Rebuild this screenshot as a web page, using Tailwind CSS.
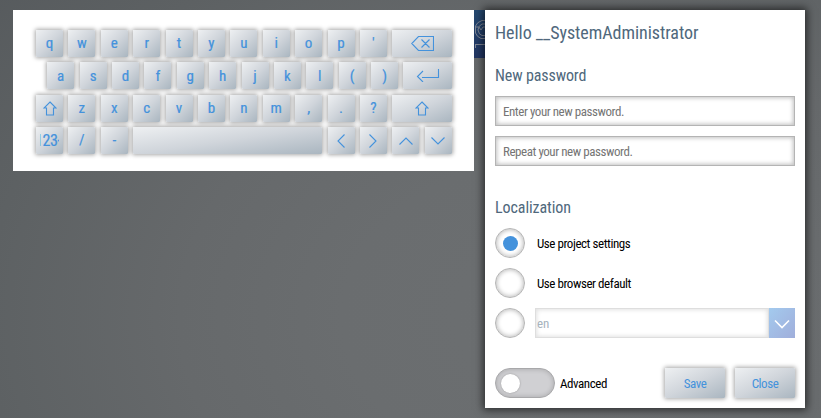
<!DOCTYPE html>
<html lang="en">
<head>
<meta charset="utf-8">
<title>User settings</title>
<script src="https://cdn.jsdelivr.net/npm/@tailwindcss/browser@4"></script>
</head>
<body class="relative flex w-[821px] h-[418px] overflow-hidden pt-[10px] pl-[13px] font-['Roboto_Condensed','Roboto',sans-serif] [font-stretch:75%] bg-[radial-gradient(ellipse_650px_460px_at_570px_317px,#6c6f71_0%,#6a6d6f_35%,#66696b_60%,#5d6163_90%,#54585b_125%)]">
<main id="keyboard" class="flex flex-col gap-[5.4px] w-[461px] h-[161px] shrink-0 bg-white pl-[23px] pt-[20px] text-[15px] text-[#4492dc]"></main>
<aside class="w-[11px] h-12 shrink-0 overflow-hidden bg-linear-to-b from-[#24486f] to-[#223562]">
<svg class="block" width="11" height="48" viewBox="0 0 11 48" fill="none" stroke="#7e8594"><path d="M11 10.500H8Q3 12 1.500 16V23Q3 27 7 28.500h4M11 14H8Q4 16 4 20 5 25 8 25.500h3M2 17h3l2 3 2-3h2M1 34.500h10M1.500 34v4"/></svg>
</aside>
<section class="relative w-[320px] h-[398px] shrink-0 bg-white px-[10px] shadow-[0_0_8px_2px_rgba(0,0,0,0.6)] text-[13px] tracking-[-0.45px] text-black">
<h1 class="h-[45px] leading-[45px] text-[18px] tracking-[-0.05px] text-[#4f687c] whitespace-nowrap">Hello __SystemAdministrator</h1>
<h2 class="h-[41px] leading-[41px] text-[16px] tracking-[-0.12px] text-[#4f687c]">New password</h2>
<div class="flex flex-col gap-[10px]">
<input class="block w-[300px] h-[30px] border border-[#b4b4b4] px-[7px] placeholder:text-[#757575] shadow-[inset_0_0_4px_1px_rgba(0,0,0,0.25)]" placeholder="Enter your new password.">
<input class="block w-[300px] h-[30px] border border-[#b4b4b4] px-[7px] placeholder:text-[#757575] shadow-[inset_0_0_4px_1px_rgba(0,0,0,0.25)]" placeholder="Repeat your new password.">
</div>
<h2 class="mt-[21px] h-[41px] leading-[41px] text-[16px] tracking-[-0.08px] text-[#4f687c]">Localization</h2>
<div class="flex flex-col gap-[10px]">
<label class="flex items-center gap-3 h-[30px]"><span class="flex items-center justify-center size-[30px] rounded-full border border-[#b4b4b4] shadow-[inset_0_0_4px_1px_rgba(0,0,0,0.25)]"><i class="size-[15px] rounded-full bg-[#4492dc]"></i></span><span class="pt-px">Use project settings</span></label>
<label class="flex items-center gap-3 h-[30px]"><span class="size-[30px] rounded-full border border-[#b4b4b4] shadow-[inset_0_0_4px_1px_rgba(0,0,0,0.25)]"></span><span class="pt-px">Use browser default</span></label>
<div class="flex items-center gap-[10px] h-[30px]"><span class="size-[30px] rounded-full border border-[#b4b4b4] shadow-[inset_0_0_4px_1px_rgba(0,0,0,0.25)]"></span>
<div class="flex flex-1 h-[30px]"><span class="flex-1 border border-[#dedede] pl-px leading-[29px] tracking-[-0.1px] text-[#a7b3bd] shadow-[inset_0_0_4px_1px_rgba(0,0,0,0.12)]">en</span><span class="flex items-center justify-center w-[26px] bg-linear-to-br from-[#a3caee] to-[#a0aedb]"><svg class="mt-px" width="16" height="10" viewBox="0 0 16 10" fill="none" stroke="white" stroke-width="1.6"><path d="M1 1.500l7 7 7-7"/></svg></span></div></div>
</div>
<footer class="flex items-center mt-[30px] h-[30px]">
<span class="flex items-center w-[60px] h-[30px] rounded-full border border-[#a8a8aa] bg-[#d0d0d3] pl-[5px] shadow-[inset_0_0_4px_1px_rgba(0,0,0,0.15)]"><i class="size-[19px] rounded-full bg-white shadow-[0_0_2px_rgba(0,0,0,0.3)]"></i></span>
<span class="w-[110px] pl-[5px] pt-px">Advanced</span>
<button class="w-[60px] h-[30px] mr-[10px] pt-px rounded-[1px] bg-linear-to-br from-[#eef0f2] via-[#d0d5db] to-[#aab6c0] shadow-[0_0_4px_1px_rgba(0,0,0,0.35)] text-[#4492dc]">Save</button>
<button class="w-[60px] h-[30px] pt-px rounded-[1px] bg-linear-to-br from-[#eef0f2] via-[#d0d5db] to-[#aab6c0] shadow-[0_0_4px_1px_rgba(0,0,0,0.35)] text-[#4492dc]">Close</button>
</footer>
</section>
<script>
const icon = (w, h, d) => `<svg width="${w}" height="${h}" viewBox="0 0 ${w} ${h}" fill="none" stroke="currentColor" stroke-width="1.1"><path d="${d}"/></svg>`;
const shift = icon(14, 15, 'M7 1l6 6h-2.500v7h-7v-7H1z');
const icons = {
  back: icon(23, 15, 'M7.500 .5h15v14h-15L.7 7.500zM10.500 3.500l8 8M18.500 3.500l-8 8'),
  enter: icon(24, 13, 'M7 2L1.500 7.500 7 13M6 8.500h16.500V0'),
  shift,
  left: icon(8, 14, 'M7.500 .5L1 7l6.500 6.500'),
  right: icon(8, 14, 'M.5 .5L7 7 .5 13.500'),
  up: icon(14, 8, 'M.5 7.500L7 1l6.500 6.500'),
  down: icon(14, 8, 'M.5 .5L7 7 13.500 .5'),
  num: '<span class="flex w-[19px] overflow-hidden whitespace-nowrap pt-px text-[16px] tracking-[-0.4px]"><span class="-ml-[5px]">123-</span></span>'
};
const rows = [
  [...'qwertyuiop\'', ['back', 60.2]],
  [...'asdfghjkl()', ['enter', 49]],
  [['shift', 27], ...'zxcvbnm,.?', ['shift', 60.2]],
  [['num', 27], '/', '-', ['', 189], ['left', 27], ['right', 27], ['up', 27], ['down', 27]]
];
document.getElementById('keyboard').innerHTML = rows.map((r, i) =>
  `<div class="flex gap-[5.4px] h-[27px] ${i === 1 ? 'pl-[11.2px]' : ''}">` + r.map(k => {
    const wide = Array.isArray(k);
    return `<button class="flex shrink-0 items-center justify-center rounded-[1px] bg-linear-to-br from-[#eef0f2] via-[#d0d5db] to-[#aab6c0] shadow-[0_0_4px_1px_rgba(0,0,0,0.35)] [-webkit-text-stroke:0.2px]" style="width:${wide ? k[1] : 27}px">${wide ? icons[k[0]] || '' : k}</button>`;
  }).join('') + '</div>').join('');
</script>
</body>
</html>
